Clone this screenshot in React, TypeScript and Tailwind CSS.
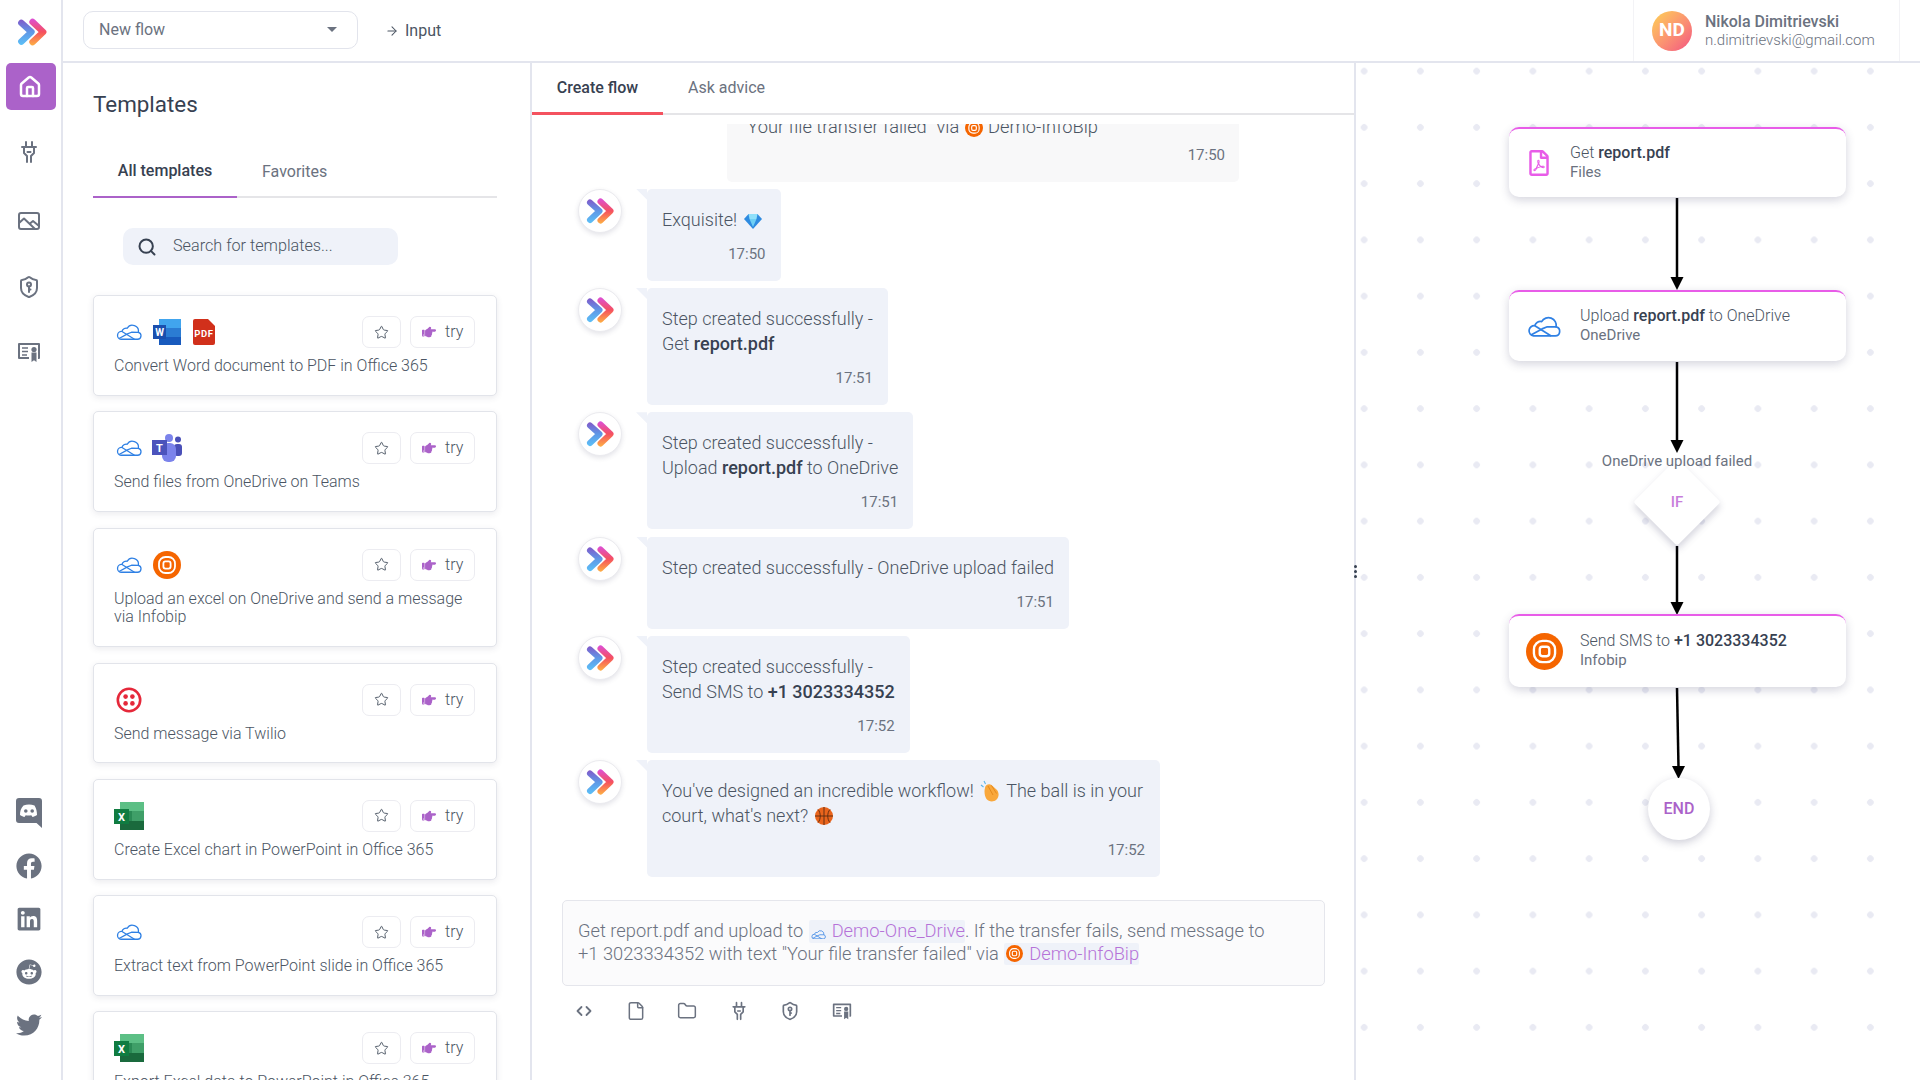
import { ReactNode } from 'react';
import { ArrowRight, File, Folder, House, Search, Star } from 'lucide-react';
import { FaFacebook, FaHandPointRight, FaLinkedin, FaReddit, FaRegFilePdf, FaTwitter } from 'react-icons/fa';

const Logo = ({ size = 30 }: { size?: number }) => (
  <svg width={size} height={size} viewBox="0 0 30 30" fill="none">
    <defs>
      <linearGradient id="logoLeft" x1="0" y1="3" x2="0" y2="27" gradientUnits="userSpaceOnUse">
        <stop offset="0" stopColor="#8257c9" />
        <stop offset="0.5" stopColor="#5f97e6" />
        <stop offset="1" stopColor="#5cc0f7" />
      </linearGradient>
      <linearGradient id="logoRight" x1="0" y1="3" x2="0" y2="27" gradientUnits="userSpaceOnUse">
        <stop offset="0" stopColor="#dd4fd2" />
        <stop offset="0.5" stopColor="#f5505f" />
        <stop offset="1" stopColor="#fdab45" />
      </linearGradient>
    </defs>
    <path d="M5 6.500 L14.500 15 L5 24" stroke="url(#logoLeft)" strokeWidth="6" strokeLinecap="round" strokeLinejoin="round" />
    <path d="M15.500 5.500 L25.500 15 L15.500 24.500" stroke="url(#logoRight)" strokeWidth="6" strokeLinecap="round" strokeLinejoin="round" />
  </svg>
);

const OneDrive = ({ w = 26 }: { w?: number }) => (
  <svg width={w} height={w * 0.62} viewBox="0 0 26 16" fill="none" stroke="#2f80e4" strokeWidth="1.3" strokeLinejoin="round">
    <path d="M5 15.2H21.6a3.5 3.5 0 0 0 .7-6.9A6 6 0 0 0 11.2 4.2 4.3 4.3 0 0 0 6 7.4 3.9 3.9 0 0 0 5 15.2z" />
    <path d="M6 7.4 L18.5 15.2" />
    <path d="M3 14.5 L11.5 9.8 L15.5 8.2 L22.3 8.3" />
  </svg>
);

const Word = () => (
  <svg width="28" height="26" viewBox="0 0 28 26">
    <rect x="6" width="22" height="9" fill="#41a5ee" />
    <rect x="6" y="9" width="22" height="9" fill="#2b7cd3" />
    <rect x="6" y="18" width="22" height="8" fill="#185abd" />
    <rect y="6" width="13" height="14" fill="#1a4fae" />
    <text x="6.5" y="17" fontSize="10" fontWeight="700" fill="#fff" textAnchor="middle" fontFamily="Roboto">W</text>
  </svg>
);

const Excel = () => (
  <svg width="30" height="28" viewBox="0 0 30 28">
    <rect x="6" width="24" height="9" fill="#5cbf85" />
    <rect x="6" y="9" width="12" height="10" fill="#2a8a55" />
    <rect x="18" y="9" width="12" height="10" fill="#3f9f68" />
    <rect x="6" y="19" width="24" height="9" fill="#1a6a3d" />
    <rect y="7" width="15" height="15" fill="#107c41" />
    <text x="7.5" y="18.5" fontSize="11" fontWeight="700" fill="#fff" textAnchor="middle" fontFamily="Roboto">X</text>
  </svg>
);

const Pdf = () => (
  <svg width="22" height="26" viewBox="0 0 22 26">
    <path d="M2 0H15L22 7V24a2 2 0 0 1-2 2H2a2 2 0 0 1-2-2V2a2 2 0 0 1 2-2z" fill="#d1301b" />
    <text x="11" y="18" fontSize="9.5" fontWeight="700" fill="#fff" textAnchor="middle" letterSpacing="0.6" fontFamily="Roboto">PDF</text>
  </svg>
);

const Teams = () => (
  <svg width="30" height="28" viewBox="0 0 30 28">
    <circle cx="26" cy="5.5" r="3" fill="#4a50b8" />
    <rect x="22" y="10" width="8" height="12" rx="3" fill="#4a50b8" />
    <circle cx="17" cy="4" r="4" fill="#7b83eb" />
    <rect x="10" y="9" width="14" height="19" rx="6" fill="#7b83eb" />
    <rect y="6" width="15" height="15" fill="#4b53bc" />
    <text x="7.5" y="17.5" fontSize="11" fontWeight="700" fill="#fff" textAnchor="middle" fontFamily="Roboto">T</text>
  </svg>
);

const Infobip = ({ size = 28 }: { size?: number }) => (
  <svg width={size} height={size} viewBox="0 0 28 28">
    <circle cx="14" cy="14" r="14" fill="#f56500" />
    <rect x="6" y="6" width="16" height="16" rx="6.5" fill="none" stroke="#fff" strokeWidth="1.8" />
    <rect x="10.4" y="10.4" width="7.2" height="7.2" rx="2" fill="none" stroke="#fff" strokeWidth="1.8" />
  </svg>
);

const Twilio = () => (
  <svg width="26" height="26" viewBox="0 0 26 26">
    <circle cx="13" cy="13" r="11.2" fill="none" stroke="#e5283a" strokeWidth="2.6" />
    <circle cx="9.6" cy="9.6" r="2.3" fill="#e5283a" />
    <circle cx="16.4" cy="9.6" r="2.3" fill="#e5283a" />
    <circle cx="9.6" cy="16.4" r="2.3" fill="#e5283a" />
    <circle cx="16.4" cy="16.4" r="2.3" fill="#e5283a" />
  </svg>
);

const Gem = () => (
  <svg width="18" height="16" viewBox="0 0 18 16" className="inline-block align-[-3px]">
    <path d="M4.5 1H13.5L18 6 9 16 0 6z" fill="#2e8be0" />
    <path d="M5.5 6H12.5L9 14z" fill="#6fd0f5" />
    <path d="M4.5 1H13.5L12.5 6H5.5z" fill="#8fe0fa" />
  </svg>
);

const Clap = () => (
  <svg width="20" height="22" viewBox="0 0 20 22" className="inline-block align-[-5px] mx-[2px]">
    <path d="M5 8C5 5 9 3 11.500 5L17 10C19.500 13 19 18 16 20 13 22.500 8.500 21.500 6.500 19 4.500 16 4 11 5 8z" fill="#f9a83c" />
    <path d="M8 6L13 15M11.500 5.500L16.500 13.500" stroke="#e58a1e" strokeWidth="1" fill="none" />
    <path d="M1 5L3.500 7M4 1L5.500 4" stroke="#5cb4e8" strokeWidth="1.100" fill="none" />
  </svg>
);

const Ball = () => (
  <svg width="18" height="18" viewBox="0 0 18 18" className="inline-block align-[-3px] ml-[2px]">
    <circle cx="9" cy="9" r="9" fill="#e9641c" />
    <path d="M9 0V18M0 9H18M3 2.5C6 5.5 6 12.5 3 15.5M15 2.5C12 5.5 12 12.5 15 15.5" stroke="#5a2a10" strokeWidth="0.9" fill="none" />
  </svg>
);

const PlugIcon = ({ size = 24 }: { size?: number }) => (
  <svg width={size} height={size} viewBox="0 0 24 24" fill="none" stroke="#6b7280" strokeWidth="2" strokeLinecap="round" strokeLinejoin="round">
    <path d="M9 2v5M15 2v5M5 7h14" />
    <path d="M7 7v6l3 3v6M17 7v6l-3 3v6" />
    <path d="M10.500 12h3" />
  </svg>
);

const ImageOutline = ({ size = 24 }: { size?: number }) => (
  <svg width={size} height={size} viewBox="0 0 24 24" fill="none" stroke="#6b7280" strokeWidth="2" strokeLinecap="round" strokeLinejoin="round">
    <rect x="2" y="4" width="20" height="16" rx="2" />
    <path d="M2 14l5-4.500L18 20" />
    <path d="M13 14.500l3-2.500 6 5" />
  </svg>
);

const ShieldKey = ({ size = 24 }: { size?: number }) => (
  <svg width={size} height={size} viewBox="0 0 24 24" fill="none" stroke="#6b7280" strokeWidth="2" strokeLinecap="round" strokeLinejoin="round">
    <path d="M20 13c0 5-3.5 7.5-7.66 8.95a1 1 0 0 1-.67-.01C7.5 20.5 4 18 4 13V6a1 1 0 0 1 1-1c2 0 4.5-1.2 6.24-2.72a1.17 1.17 0 0 1 1.52 0C14.51 3.81 17 5 19 5a1 1 0 0 1 1 1z" />
    <circle cx="12" cy="9.500" r="2" />
    <path d="M12 11.500V17M12 14.500h1.500" />
  </svg>
);

const Certificate = ({ size = 24 }: { size?: number }) => (
  <svg width={size} height={size} viewBox="0 0 24 24" fill="none" stroke="#6b7280" strokeWidth="2" strokeLinejoin="round">
    <path d="M12 18H2V4h20v14h-1" />
    <path d="M5 8h6M5 11.500h6M5 15h5" strokeWidth="1.600" />
    <circle cx="17" cy="9.500" r="2.600" fill="#6b7280" stroke="none" />
    <path d="M14.500 12.500h5V22l-2.500-1.800L14.500 22z" fill="#6b7280" stroke="none" />
  </svg>
);

const CodeBrackets = () => (
  <svg width="20" height="20" viewBox="0 0 20 20" fill="none" stroke="#6b7280" strokeWidth="1.800" strokeLinecap="round" strokeLinejoin="round">
    <path d="M7.500 6L3.500 10l4 4M12.500 6l4 4-4 4" />
  </svg>
);

// old square Discord badge with the tail at the bottom right
const DiscordBadge = () => (
  <svg width="26" height="30" viewBox="0 0 26 30">
    <path d="M3 0H23a3 3 0 0 1 3 3V30L20.500 25H3a3 3 0 0 1-3-3V3a3 3 0 0 1 3-3z" fill="#6b7280" />
    <path d="M7.500 7.500c3.500-1.500 7.500-1.500 11 0 1.800 3 2.500 6 2.500 9.500-1.700 1.200-3.300 1.800-4.500 2l-1.200-1.700c-1.900.4-3.700.4-5.600 0L8.500 19c-1.200-.2-2.800-.8-4.500-2 0-3.500.7-6.500 3.500-9.500z" fill="#fff" />
    <circle cx="9.800" cy="13" r="1.800" fill="#6b7280" />
    <circle cx="16.200" cy="13" r="1.800" fill="#6b7280" />
  </svg>
);

const templates: { icons: ReactNode[]; title: string }[] = [
  { icons: [<OneDrive />, <Word />, <Pdf />], title: 'Convert Word document to PDF in Office 365' },
  { icons: [<OneDrive />, <Teams />], title: 'Send files from OneDrive on Teams' },
  { icons: [<OneDrive />, <Infobip />], title: 'Upload an excel on OneDrive and send a message via Infobip' },
  { icons: [<Twilio />], title: 'Send message via Twilio' },
  { icons: [<Excel />], title: 'Create Excel chart in PowerPoint in Office 365' },
  { icons: [<OneDrive />], title: 'Extract text from PowerPoint slide in Office 365' },
  { icons: [<Excel />], title: 'Export Excel data to PowerPoint in Office 365' },
];

const messages: { body: ReactNode; time: string }[] = [
  { body: <>Exquisite! <span className="ml-[2px] mr-[4px]"><Gem /></span></>, time: '17:50' },
  { body: <>Step created successfully -<br />Get <b className="font-medium text-[#374151]">report.pdf</b></>, time: '17:51' },
  { body: <>Step created successfully -<br />Upload <b className="font-medium text-[#374151]">report.pdf</b> to OneDrive</>, time: '17:51' },
  { body: <>Step created successfully - OneDrive upload failed</>, time: '17:51' },
  { body: <>Step created successfully -<br />Send SMS to <b className="font-medium text-[#374151]">+1 3023334352</b></>, time: '17:52' },
  { body: <>You've designed an incredible workflow! <Clap /> The ball is in your<span className="inline-block w-[2px]" /><br />court, what's next? <Ball /></>, time: '17:52' },
];

const Mention = ({ icon, label }: { icon: ReactNode; label: string }) => (
  <span className="inline-block bg-[#eff2f9] text-[#b673d8] rounded-[2px] pl-[2px] ml-[1px]">
    <span className="inline-block align-[-2px] mr-[6px]">{icon}</span>
    {label}
  </span>
);

const FlowNode = ({ top, iconLeft, textLeft, icon, sub, children }: { top: string; iconLeft: string; textLeft: string; icon: ReactNode; sub: string; children: ReactNode }) => (
  <div className={`absolute left-[153px] w-[337px] ${top} bg-white rounded-[10px] border-t-2 border-[#e85ce8] shadow-[0_3px_10px_rgba(60,60,100,0.22)] flex items-center`}>
    <div className={`absolute ${iconLeft} w-[40px] h-full flex items-center justify-center`}>{icon}</div>
    <div className={`${textLeft} pb-[2px] text-[16px] leading-[19px] font-light text-[#4b5563]`}>
      <div>{children}</div>
      <div className="text-[#6b7280] font-normal text-[15px] leading-[20px]">{sub}</div>
    </div>
  </div>
);

export default function App() {
  return (
    <div className="flex w-screen h-screen overflow-hidden bg-white font-['Roboto',sans-serif] text-[#4b5563]">
      {/* Left rail */}
      <aside className="w-[63px] shrink-0 h-full border-r-2 border-[#e3e5ee] flex flex-col items-start">
        <div className="h-[63px] w-full flex items-center justify-center pl-[2px]">
          <Logo size={32} />
        </div>
        <div className="ml-[6px] w-[50px] h-[47px] rounded-[5px] bg-[#ab62c9] flex items-center justify-center pr-[3px]">
          <House size={24} color="#fff" strokeWidth={2.5} />
        </div>
        <div className="ml-[17px] mt-[30px]"><PlugIcon /></div>
        <div className="ml-[17px] mt-[45px]"><ImageOutline /></div>
        <div className="ml-[17px] mt-[42px]"><ShieldKey /></div>
        <div className="ml-[17px] mt-[41px]"><Certificate /></div>
        <div className="mt-auto mb-[42px] ml-[16px] flex flex-col gap-[27px] text-[#6b7280]">
          <div className="-mb-[2px] -mt-[2px]"><DiscordBadge /></div>
          <FaFacebook size={26} />
          <FaLinkedin size={26} />
          <FaReddit size={26} />
          <FaTwitter size={26} />
        </div>
      </aside>

      <div className="flex-1 min-w-0 flex flex-col">
        {/* Top bar */}
        <header className="h-[63px] shrink-0 border-b-2 border-[#e3e5ee] flex items-center pl-[20px] pr-[20px]">
          <div className="w-[275px] h-[38px] -mt-[2px] rounded-[10px] border border-[#e2e4ec] flex items-center justify-between pl-[15px] pr-[20px] text-[16px] text-[#6b7280]">
            New flow
            <span className="w-0 h-0 border-x-[5px] border-x-transparent border-t-[5px] border-t-[#6b7280]" />
          </div>
          <div className="ml-[27px] flex items-center gap-[6px] text-[16px] text-[#4b5563]">
            <ArrowRight size={14} strokeWidth={1.8} />
            Input
          </div>
          <div className="ml-auto w-[267px] h-full border-x border-[#f3f3f6] flex items-center pl-[18px]">
            <div className="w-[40px] h-[40px] rounded-full bg-gradient-to-br from-[#fdd14f] to-[#f2507f] flex items-center justify-center text-white font-bold text-[19px]">ND</div>
            <div className="ml-[13px] text-[15px] leading-[19px]">
              <div className="font-medium text-[16px] text-[#6b7280]">Nikola Dimitrievski</div>
              <div className="font-light text-[#6b7280]">n.dimitrievski@gmail.com</div>
            </div>
          </div>
        </header>

        <div className="flex-1 min-h-0 flex">
          {/* Templates */}
          <section className="w-[469px] shrink-0 h-full overflow-hidden border-r-2 border-[#e3e5ee] pl-[30px] pr-[33px]">
            <h1 className="mt-[26px] text-[22.4px] leading-[30px] text-[#374151]">Templates</h1>
            <div className="mt-[29px] flex border-b-2 border-[#e5e5e8] h-[50px] text-[16px]">
              <div className="w-[144px] h-[50px] border-b-2 border-[#ab62c9] flex items-center justify-center font-medium text-[#374151] pb-[2px]">All templates</div>
              <div className="ml-[25px] h-[48px] flex items-center text-[#6b7280]">Favorites</div>
            </div>
            <div className="mt-[30px] ml-[30px] w-[275px] h-[37px] rounded-[10px] bg-[#eff2f9] flex items-center pl-[14px] text-[16.2px] font-light text-[#4b5563]">
              <Search size={20} color="#374151" strokeWidth={2.4} />
              <span className="ml-[16px]">Search for templates...</span>
            </div>
            <div className="mt-[30px] flex flex-col gap-[15.6px]">
              {templates.map((t) => (
                <div key={t.title} className="shrink-0 rounded-[5px] border border-[#e2e4ea] shadow-[0_2px_6px_rgba(60,60,90,0.1)] pt-[20px] pb-[19px] pl-[20px] pr-[21px] bg-white">
                  <div className="flex items-center justify-between">
                    <div className="flex items-center gap-[7.5px]">
                      {t.icons.map((icon, i) => (
                        <div key={i} className="w-[30px] flex justify-center">{icon}</div>
                      ))}
                    </div>
                    <div className="flex gap-[9px]">
                      <div className="w-[39px] h-[32px] rounded-[7px] border border-[#ececf1] flex items-center justify-center">
                        <Star size={15} color="#4b5563" strokeWidth={1.5} />
                      </div>
                      <div className="w-[65px] h-[32px] rounded-[7px] border border-[#ececf1] flex items-center pl-[11px] text-[16px] font-light">
                        <FaHandPointRight size={14} color="#ab62c9" />
                        <span className="ml-[9px]">try</span>
                      </div>
                    </div>
                  </div>
                  <p className="mt-[9px] text-[16px] leading-[18.7px] font-light pr-[10px]">{t.title}</p>
                </div>
              ))}
            </div>
          </section>

          {/* Chat */}
          <section className="w-[824px] shrink-0 h-full border-r-2 border-[#e3e5ee] relative flex flex-col">
            <div className="h-[52px] shrink-0 border-b-2 border-[#e5e5e8] flex text-[16px]">
              <div className="w-[131px] h-[52px] border-b-[3px] border-[#f4525f] flex items-center justify-center font-medium text-[#374151]">Create flow</div>
              <div className="ml-[25px] h-[50px] flex items-center text-[#6b7280]">Ask advice</div>
            </div>

            <div className="mt-[9px] h-[753px] shrink-0 overflow-hidden flex flex-col justify-end gap-[7.25px] text-[18px] leading-[25px] font-light text-[#4b5563]">
              <div className="shrink-0 ml-[195px] w-[512px] rounded-[5px] bg-[#f8f8f9] pl-[15px] pr-[14px] pb-[16px]">
                <div className="text-[18.3px]">
                  "Your file transfer failed" via{' '}
                  <span className="inline-block align-[-4px] mx-[1px]"><Infobip size={18} /></span> Demo-InfoBip
                </div>
                <div className="mt-[5px] text-right text-[15px] leading-[22px] font-normal text-[#6b7280]">17:50</div>
              </div>
              {messages.map((m, i) => (
                <div key={i} className="shrink-0 flex items-start pl-[46px]">
                  <div className="w-[44px] h-[44px] rounded-full border border-[#ebebef] bg-white shadow-[0_2px_5px_rgba(60,60,90,0.14)] flex items-center justify-center shrink-0">
                    <Logo size={30} />
                  </div>
                  <div className="relative ml-[25px] w-fit rounded-[5px] bg-[#eff2f9] px-[15px] pt-[18px] pb-[16px]">
                    <div className="absolute -left-[11px] top-0 w-[11px] h-[11px] bg-[#eff2f9] [clip-path:polygon(0_0,100%_0,100%_100%)]" />
                    <div className="whitespace-nowrap">{m.body}</div>
                    <div className="mt-[11px] text-right text-[15px] leading-[22px] font-normal text-[#6b7280]">{m.time}</div>
                  </div>
                </div>
              ))}
            </div>

            <div className="mt-[23px] ml-[30px] w-[763px] h-[86px] shrink-0 rounded-[5px] border border-[#e5e6ec] bg-[#fbfbfc] pt-[19px] pl-[15px] text-[18.3px] leading-[22.5px] font-light text-[#6b7280]">
              Get report.pdf and upload to <Mention icon={<OneDrive w={15} />} label="Demo-One_Drive" />. If the transfer fails, send message to
              <br />
              +1 3023334352 with text "Your file transfer failed" via <Mention icon={<Infobip size={17} />} label="Demo-InfoBip" />
            </div>

            <div className="mt-[15px] ml-[42px] flex gap-[31.5px]">
              <CodeBrackets />
              <File size={20} color="#6b7280" strokeWidth={1.8} />
              <Folder size={20} color="#6b7280" strokeWidth={1.8} />
              <PlugIcon size={20} />
              <ShieldKey size={20} />
              <Certificate size={20} />
            </div>

            {/* resize handle */}
            <div className="absolute -right-[3px] top-[502px] flex flex-col gap-[2px]">
              <span className="w-[3px] h-[3px] rounded-full bg-[#374151]" />
              <span className="w-[3px] h-[3px] rounded-full bg-[#374151]" />
              <span className="w-[3px] h-[3px] rounded-full bg-[#374151]" />
            </div>
          </section>

          {/* Flow canvas */}
          <section className="flex-1 relative overflow-hidden bg-[radial-gradient(circle,#e9eaf3_3px,transparent_3.6px)] bg-[size:56.25px_56.25px] bg-[position:-20px_-20px]">
            <svg className="absolute inset-0 w-full h-full" fill="none" stroke="#000" strokeWidth="2.5">
              <path d="M321 135V215" />
              <path d="M321 299V378" />
              <path d="M321 483V540" />
              <path d="M321 625L322.500 704" />
              <g fill="#000" stroke="none">
                <path d="M314.500 214H327.500L321 227z" />
                <path d="M314.500 377H327.500L321 390z" />
                <path d="M314.500 539H327.500L321 552z" />
                <path d="M316 703H329L322.500 716z" />
              </g>
            </svg>

            <FlowNode top="top-[64px] h-[70px]" iconLeft="left-[10px]" textLeft="ml-[61px]" icon={<FaRegFilePdf size={26} color="#e85ce8" />} sub="Files">
              Get <b className="font-medium text-[#374151]">report.pdf</b>
            </FlowNode>
            <FlowNode top="top-[227px] h-[71px]" iconLeft="left-[15px]" textLeft="ml-[71px]" icon={<OneDrive w={34} />} sub="OneDrive">
              Upload <b className="font-medium text-[#374151]">report.pdf</b> to OneDrive
            </FlowNode>
            <div className="absolute left-[321px] top-[398px] -translate-x-1/2 -translate-y-1/2 z-10 whitespace-nowrap text-[15px] text-[#6b7280]">
              OneDrive upload failed
            </div>
            <div className="absolute left-[290px] top-[408px] w-[62px] h-[62px] rotate-45 rounded-[3px] bg-white shadow-[3px_3px_7px_rgba(60,60,100,0.22)]" />
            <div className="absolute left-[321px] top-[439px] -translate-x-1/2 -translate-y-1/2 text-[15px] font-medium text-[#c77ddb]">IF</div>
            <FlowNode top="top-[551px] h-[73px]" iconLeft="left-[15px]" textLeft="ml-[71px]" icon={<Infobip size={37} />} sub="Infobip">
              Send SMS to <b className="font-medium text-[#374151]">+1 3023334352</b>
            </FlowNode>
            <div className="absolute left-[292px] top-[715px] w-[62px] h-[62px] rounded-full bg-white shadow-[0_3px_9px_rgba(60,60,100,0.25)] flex items-center justify-center text-[16px] font-medium text-[#ab62c9]">
              END
            </div>
          </section>
        </div>
      </div>
    </div>
  );
}
